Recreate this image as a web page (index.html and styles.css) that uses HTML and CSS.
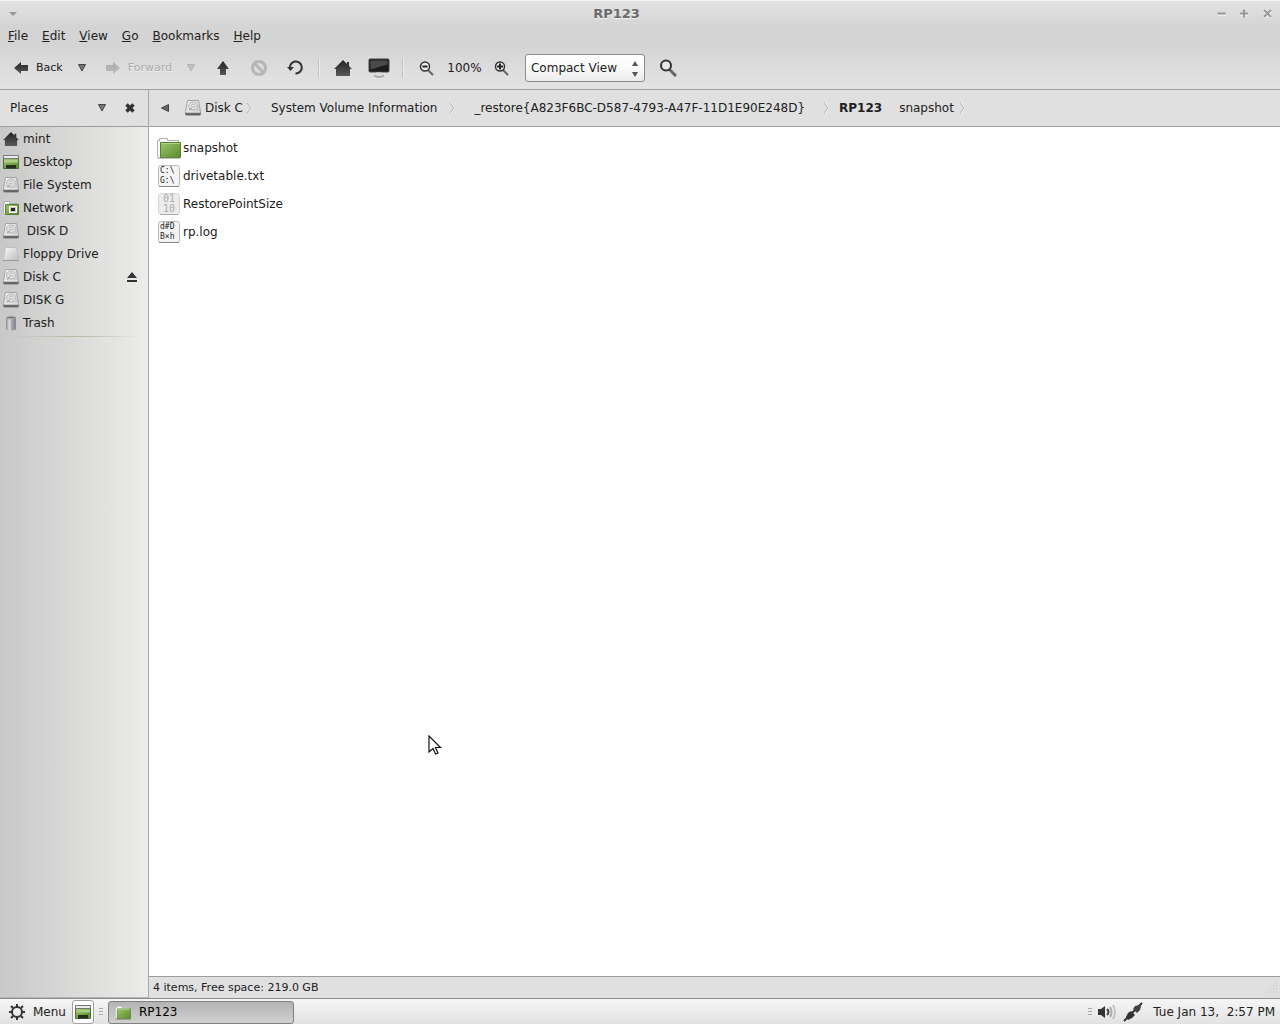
FILE: index.html
```
<!DOCTYPE html>
<html lang="en">

<head>
    <title>RP123</title>
    <meta charset="UTF-8">
    <meta name="viewport" content="width=device-width, initial-scale=1">
    <link rel="stylesheet" href="styles.css">
</head>

<body>
    <!-- shared icons -->
    <svg class="sprite" aria-hidden="true">
        <defs>
            <linearGradient id="dark" x1="0" y1="0" x2="0" y2="1">
                <stop offset="0" stop-color="#222"/>
                <stop offset="1" stop-color="#5a5a5a"/>
            </linearGradient>
            <linearGradient id="metal" x1="0" y1="0" x2="1" y2="1">
                <stop offset="0" stop-color="#fafafa"/>
                <stop offset="1" stop-color="#bcbcbc"/>
            </linearGradient>
            <linearGradient id="green" x1="0" y1="0" x2="1" y2="1">
                <stop offset="0" stop-color="#9cc56b"/>
                <stop offset="1" stop-color="#5a8a2c"/>
            </linearGradient>
            <linearGradient id="can" x1="0" y1="0" x2="1" y2="0">
                <stop offset="0" stop-color="#8b8b92"/>
                <stop offset="0.35" stop-color="#dcdce0"/>
                <stop offset="0.6" stop-color="#a0a0a6"/>
                <stop offset="1" stop-color="#85858c"/>
            </linearGradient>
        </defs>
        <symbol id="drive" viewBox="0 0 16 16">
            <path d="M2.5 .5h11l2 11v3.2q0 .8-1 .8h-13q-1 0-1-.8v-3.2z" fill="url(#metal)" stroke="#a4a4a4"/>
            <path d="M.5 12.5h15v2.500H.5z" fill="#666"/>
            <path d="M1 12h14" stroke="#eee"/>
            <ellipse cx="8" cy="6" rx="4.5" ry="4" fill="#dedede" stroke="#bbb"/>
            <ellipse cx="8" cy="5.5" rx="1.5" ry="1.3" fill="#fafafa" stroke="#b4b4b4"/>
            <path d="M4 10l3-2" stroke="#999"/>
        </symbol>
        <symbol id="home" viewBox="0 0 18 16">
            <path d="M9 0L0 9h2v7h14V9h2l-3-3V2h-2v2z" fill="url(#dark)"/>
        </symbol>
        <symbol id="desk" viewBox="0 0 16 14">
            <path d="M.5 3v10.500h15V3z" fill="url(#green)" stroke="#4d7033"/>
            <path d="M1 4.500h14v3H1z" fill="#a9cf80"/>
            <path d="M.5 .5h15v3H.5z" fill="#ececec" stroke="#777"/>
            <path d="M3 10h10v3.500H3z" fill="#27301f"/>
        </symbol>
        <symbol id="folder" viewBox="0 0 24 22">
            <path d="M.5 20.5v-17h2v-2h8v2h11v4" fill="#fafafa" stroke="#b0b0b0"/>
            <path d="M3.500 5.500h20v15h-20z" fill="url(#green)" stroke="#557f2d"/>
            <path d="M4 6.500h19" stroke="#b4d48c"/>
            <path d="M1 21h22" stroke="#7c8a6c"/>
        </symbol>
        <symbol id="down" viewBox="0 0 10 10">
            <path d="M1.500 1.500h7L5 8z" fill="#777" stroke="#444"/>
        </symbol>
        <symbol id="arrow" viewBox="0 0 14 12">
            <path d="M7 0v3h7v6H7v3L0 6z" fill="url(#dark)"/>
        </symbol>
        <symbol id="chevron" viewBox="0 0 7 14">
            <path d="M2 2l4 5-4 5" fill="none" stroke="#f4f4f4"/>
            <path d="M1 2l4 5-4 5" fill="none" stroke="#b4b4b4"/>
        </symbol>
        <symbol id="grip" viewBox="0 0 4 8">
            <path d="M0 .5h4M0 3.500h4M0 6.500h4" stroke="#aaa"/>
        </symbol>
    </svg>

    <header class="chrome">
        <div class="titlebar">
            <button class="win-btn" aria-label="Window menu"><svg width="8" height="5"><path d="M0 1h8L4 5z" fill="#999"/></svg></button>
            <h1 class="title">RP123</h1>
            <div class="win-btns">
                <button class="win-btn" aria-label="Minimize"><svg width="9" height="9"><path d="M1 6h8" stroke="#fff"/><path d="M.5 4.5h8" stroke="#999" stroke-width="2"/></svg></button>
                <button class="win-btn" aria-label="Maximize"><svg width="9" height="9"><path d="M0 6h8" stroke="#fff"/><path d="M0 4.5h8M4 .5v8" stroke="#999" stroke-width="2"/></svg></button>
                <button class="win-btn" aria-label="Close"><svg width="9" height="9"><path d="M1 2l7 7M8 2L1 9" stroke="#fff" stroke-width="2"/><path d="M1 1l7 7M8 1L1 8" stroke="#999" stroke-width="2"/></svg></button>
            </div>
        </div>
        <nav class="menubar">
            <a href="#"><u>F</u>ile</a>
            <a href="#"><u>E</u>dit</a>
            <a href="#"><u>V</u>iew</a>
            <a href="#"><u>G</u>o</a>
            <a href="#"><u>B</u>ookmarks</a>
            <a href="#"><u>H</u>elp</a>
        </nav>
        <div class="toolbar">
            <button class="nav-btn"><svg width="14" height="12"><use href="#arrow"/></svg>Back</button>
            <button class="drop" aria-label="Back history"><svg width="10" height="10"><use href="#down"/></svg></button>
            <button class="nav-btn" disabled><svg class="flip" width="14" height="12"><use href="#arrow"/></svg>Forward</button>
            <button class="drop forward-drop" aria-label="Forward history" disabled><svg width="10" height="10"><use href="#down"/></svg></button>
            <button class="tool" aria-label="Up"><svg width="12" height="14"><path d="M6 0l6 8H9v6H3V8H0z" fill="url(#dark)"/></svg></button>
            <button class="tool" aria-label="Stop" disabled><svg width="16" height="16"><circle cx="8" cy="8" r="6.5" fill="none" stroke="#4a4040" stroke-width="3"/><path d="M4 4l8 8" stroke="#4a4040" stroke-width="3"/></svg></button>
            <button class="tool" aria-label="Reload"><svg width="16" height="16"><path d="M3 9A6 6 0 1 1 8.5 13.5" fill="none" stroke="#333" stroke-width="2"/><path d="M0 7h7l-3.500 4z" fill="#333"/></svg></button>
            <span class="sep"></span>
            <button class="tool" aria-label="Home"><svg width="18" height="16"><use href="#home"/></svg></button>
            <button class="tool" aria-label="Computer"><svg width="22" height="20"><rect x="1" y="1" width="20" height="13" rx="1" fill="#1c1c1c" stroke="#444"/><path d="M2.500 2.500h17v4l-17 5z" fill="#4a4a4a"/><path d="M8 14.500h6l1 2.500H7z" fill="#ddd"/><path d="M6 17.500q5 3 10 0" fill="none" stroke="#aaa" stroke-width="2"/></svg></button>
            <span class="sep"></span>
            <button class="tool" aria-label="Zoom out"><svg width="15" height="15"><path d="M9 9l5 5" stroke="#666" stroke-width="2"/><circle cx="6" cy="5.500" r="4.500" fill="#eee" stroke="#333" stroke-width="1.500"/><path d="M3.500 5.500h5" stroke="#222" stroke-width="2"/></svg></button>
            <span class="zoom">100%</span>
            <button class="tool" aria-label="Zoom in"><svg width="15" height="15"><path d="M9 9l5 5" stroke="#666" stroke-width="2"/><circle cx="6" cy="5.500" r="4.500" fill="#eee" stroke="#333" stroke-width="1.500"/><path d="M3 5.500h6M6 2.500v6" stroke="#222" stroke-width="2"/></svg></button>
            <div class="view">
                <select aria-label="View as">
                    <option>Icon View</option>
                    <option>List View</option>
                    <option selected>Compact View</option>
                </select>
                <svg class="view-arrows" width="6" height="16"><path d="M0 5h6L3 0zM0 11h6l-3 5z" fill="#555"/></svg>
            </div>
            <button class="tool search" aria-label="Search"><svg width="18" height="18"><path d="M10 10l7 7" stroke="#666" stroke-width="3"/><circle cx="7" cy="6.500" r="5" fill="#e8e8e8" stroke="#333" stroke-width="2"/></svg></button>
        </div>
    </header>

    <div class="window">
        <aside class="side">
            <div class="side-head">
                <span class="side-title">Places</span>
                <button class="drop" aria-label="Choose pane"><svg width="10" height="10"><use href="#down"/></svg></button>
                <button class="side-close" aria-label="Close side pane"><svg width="10" height="10"><path d="M1.500 1.500l7 7M8.500 1.500l-7 7" stroke="#333" stroke-width="3.500"/></svg></button>
            </div>
            <ul class="places">
                <li><a href="#"><svg width="16" height="14"><use href="#home"/></svg>mint</a></li>
                <li><a href="#"><svg width="16" height="14"><use href="#desk"/></svg>Desktop</a></li>
                <li><a href="#"><svg width="16" height="16"><use href="#drive"/></svg>File System</a></li>
                <li><a href="#"><svg width="16" height="16"><path d="M.5 14V3.500h1v-2h5v2h8V5" fill="#fff" stroke="#b0b0b0"/><path d="M2.500 4.500h13v10h-13z" fill="url(#green)" stroke="#557f2d"/><path d="M6.500 6.500h7v6h-7z" fill="#ccc" stroke="#fff"/><path d="M8 8h4v3H8z" fill="#222"/></svg>Network</a></li>
                <li><a href="#"><svg width="16" height="16"><use href="#drive"/></svg>&nbsp;DISK D</a></li>
                <li><a href="#"><svg width="16" height="16"><path d="M2.500 1.500h11l2 11v2H.5v-2z" fill="url(#metal)" stroke="#c0c0c0"/><path d="M0 14.500h16" stroke="#999"/></svg>Floppy Drive</a></li>
                <li>
                    <a href="#"><svg width="16" height="16"><use href="#drive"/></svg>Disk C</a>
                    <button class="eject" aria-label="Eject Disk C"><svg width="10" height="10"><path d="M5 0l5 6H0zM0 8h10v2H0z" fill="#333"/></svg></button>
                </li>
                <li><a href="#"><svg width="16" height="16"><use href="#drive"/></svg>DISK G</a></li>
                <li><a href="#"><svg width="16" height="16"><path d="M3 2.500h10v12q-5 2-10 0z" fill="url(#can)"/><ellipse cx="8" cy="2.500" rx="4.500" ry="1.500" fill="#777" stroke="#b8b8be"/></svg>Trash</a></li>
            </ul>
            <hr class="side-line">
        </aside>

        <main class="main">
            <nav class="pathbar">
                <button class="path-back" aria-label="Scroll path"><svg width="8" height="8"><path d="M7.500 .5v7L.5 4z" fill="#666" stroke="#444"/></svg></button>
                <a class="crumb disk" href="#"><svg width="16" height="16"><use href="#drive"/></svg>Disk C</a>
                <svg class="chev" width="7" height="14"><use href="#chevron"/></svg>
                <a class="crumb wide" href="#">System Volume Information</a>
                <svg class="chev" width="7" height="14"><use href="#chevron"/></svg>
                <a class="crumb long" href="#">_restore{A823F6BC-D587-4793-A47F-11D1E90E248D}</a>
                <svg class="chev" width="7" height="14"><use href="#chevron"/></svg>
                <a class="crumb current" href="#">RP123</a>
                <a class="crumb last" href="#">snapshot</a>
                <svg class="chev" width="7" height="14"><use href="#chevron"/></svg>
            </nav>
            <ul class="files">
                <li><a href="#"><svg width="24" height="22"><use href="#folder"/></svg>snapshot</a></li>
                <li><a href="#"><svg width="24" height="24"><rect x="1.500" y="1.500" width="21" height="21" rx="2" fill="#f4f4f4" stroke="#b8b8b8"/><path d="M2 22.500h20" stroke="#888"/><text class="thumb" x="3" y="9">C:\</text><text class="thumb" x="3" y="19">G:\</text></svg>drivetable.txt</a></li>
                <li><a href="#"><svg width="24" height="24"><rect x="1.500" y="1.500" width="21" height="21" rx="3" fill="#ececec" stroke="#d4d4d4"/><path d="M3 22.500h18" stroke="#aaa"/><text class="thumb bits" x="6" y="10">01</text><text class="thumb bits" x="6" y="20">10</text></svg>RestorePointSize</a></li>
                <li><a href="#"><svg width="24" height="24"><rect x="1.500" y="1.500" width="21" height="21" rx="2" fill="#f4f4f4" stroke="#b8b8b8"/><path d="M2 22.500h20" stroke="#888"/><text class="thumb" x="3" y="9">d#D</text><text class="thumb" x="3" y="19">B×h</text></svg>rp.log</a></li>
            </ul>
            <footer class="status">
                <span>4 items, Free space: 219.0 GB</span>
                <svg width="11" height="11"><path d="M9 1h2M6 4h5M3 7h8M0 10h11" stroke="#c4c4c4" stroke-dasharray="1 2"/></svg>
            </footer>
        </main>
    </div>

    <!-- desktop panel -->
    <div class="panel">
        <button class="menu-btn"><svg width="18" height="18" viewBox="-9 -9 18 18"><circle r="5" fill="none" stroke="#333" stroke-width="2"/><path d="M0-8v3M0 8v-3M-8 0h3M8 0h-3M-6-6l2 2M6 6l-2-2M-6 6l2-2M6-6L4-4" stroke="#333" stroke-width="2"/></svg>Menu</button>
        <button class="launcher" aria-label="Show desktop"><svg width="16" height="14"><use href="#desk"/></svg></button>
        <svg class="grip" width="4" height="8"><use href="#grip"/></svg>
        <button class="task"><svg width="16" height="15"><use href="#folder"/></svg>RP123</button>
        <div class="tray">
            <svg class="grip" width="4" height="8"><use href="#grip"/></svg>
            <svg width="19" height="16"><path d="M0 5h3l4-3v12l-4-3H0z" fill="#333"/><path d="M9 5q3 3 0 6" fill="none" stroke="#444" stroke-width="2"/><path d="M12 3q3 5 0 10" fill="none" stroke="#aaa" stroke-width="2"/><path d="M15 1q4 7 0 14" fill="none" stroke="#c4c4c4" stroke-width="2"/></svg>
            <svg width="20" height="20"><path d="M1 19L19 1" stroke="#333" stroke-width="2"/><path d="M3 15l2-4 3-2 4 4-3 3-4 2z" fill="#333"/><path d="M10 7l2-3 4-1 2 1-1 4-3 3z" fill="#444"/></svg>
            <time class="clock">Tue Jan 13,&nbsp; 2:57 PM</time>
        </div>
    </div>

    <svg class="pointer" width="14" height="21" viewBox="0 0 14 21"><path d="M1 1v16l4-3.500 2.500 5.500 2.500-1-2.500-5.500h5z" fill="#fff" stroke="#111" stroke-width="1.200"/></svg>
</body>

</html>
```
FILE: styles.css
```
* {
    box-sizing: border-box;
    margin: 0;
    padding: 0;
}

body {
    display: flex;
    flex-direction: column;
    height: 100vh;
    overflow: hidden;
    background: #e0e0e0;
    color: #212121;
    font: 12px/16px "DejaVu Sans", sans-serif;
}

a {
    color: inherit;
    text-decoration: none;
}

ul {
    list-style: none;
}

svg {
    display: block;
    flex: none;
}

button {
    display: flex;
    align-items: center;
    justify-content: center;
    flex: none;
    background: none;
    border: none;
    color: inherit;
    font: inherit;
}

button:disabled svg {
    opacity: 0.25;
}

.sprite {
    position: absolute;
    width: 0;
    height: 0;
}

/* title, menu and toolbar */
.chrome {
    background: linear-gradient(#e3e3e3, #d4d4d4 26px, #d4d4d4 44px, #e4e4e4);
    border-top: 1px solid #f6f6f6;
    border-bottom: 1px solid #a0a0a0;
}

.titlebar {
    display: flex;
    align-items: center;
    height: 25px;
    padding: 0 8px;
}

.win-btn {
    width: 9px;
    height: 9px;
}

.title {
    flex: 1;
    margin-left: -1px;
    color: #6a6a6a;
    font-size: 13px;
    text-align: center;
    text-shadow: 0 1px #f4f4f4;
}

.win-btns {
    display: flex;
    gap: 14px;
}

.menubar {
    display: flex;
    gap: 14px;
    height: 20px;
    padding: 2px 8px;
}

.toolbar {
    display: flex;
    align-items: center;
    height: 43px;
    padding: 1px 0 0 2px;
}

.nav-btn {
    gap: 8px;
    padding: 0 7px 0 12px;
    font-size: 11px;
}

.nav-btn:disabled {
    color: #aaa;
    text-shadow: 0 1px #f0f0f0;
}

.flip {
    transform: scaleX(-1);
}

.drop {
    width: 24px;
    height: 24px;
}

.forward-drop {
    margin-right: 2px;
}

.tool {
    width: 36px;
    height: 28px;
}

.sep {
    width: 2px;
    height: 20px;
    margin: 0 5px;
    border-left: 1px solid #c0c0c0;
    border-right: 1px solid #ededed;
}

.zoom {
    width: 39px;
    text-align: center;
}

.view {
    position: relative;
    margin: 0 5px;
}

.view select {
    display: block;
    width: 120px;
    height: 28px;
    padding: 0 5px;
    appearance: none;
    background: linear-gradient(#ffffff, #fafafa 50%, #ebebeb);
    border: 1px solid #8c8c8c;
    border-radius: 3px;
    color: inherit;
    font: inherit;
}

.view-arrows {
    position: absolute;
    top: 7px;
    right: 7px;
    pointer-events: none;
}

/* side pane */
.window {
    display: flex;
    flex: 1;
    min-height: 0;
}

.side {
    width: 149px;
    background: linear-gradient(to right, #c8c8c8, #ececea);
    border-right: 1px solid #a8a8a8;
    border-bottom: 1px solid #b4b4b4;
}

.side-head,
.pathbar {
    display: flex;
    align-items: center;
    height: 37px;
    background: #e0e0e0;
    border-bottom: 1px solid #9c9c9c;
}

.side-head {
    padding: 0 8px 0 10px;
}

.side-title {
    flex: 1;
}

.side-close {
    width: 20px;
    height: 20px;
    margin-left: 6px;
}

.places li {
    display: flex;
    align-items: center;
    justify-content: space-between;
    height: 23px;
    padding: 0 11px 0 3px;
}

.places a {
    display: flex;
    align-items: center;
    gap: 4px;
}

.side-line {
    height: 1px;
    margin: 2px 8px;
    border: none;
    background: linear-gradient(to right, transparent, #b9b7a4, transparent);
}

/* location and files */
.main {
    display: flex;
    flex: 1;
    flex-direction: column;
    min-width: 0;
    background: #fff;
}

.path-back {
    width: 32px;
    height: 24px;
}

.crumb {
    display: flex;
    align-items: center;
    gap: 4px;
    white-space: nowrap;
}

.disk {
    padding: 0 3px 0 4px;
}

.wide {
    padding: 0 12px;
}

.long {
    padding: 0 18px 0 12px;
}

.current {
    padding: 0 8px 0 9px;
    font-weight: bold;
}

.last {
    padding: 0 5px 0 9px;
}

.chev {
    margin-right: 6px;
}

.long + .chev {
    margin-right: 0;
}

.files {
    flex: 1;
    padding: 7px 8px;
}

.files a {
    display: flex;
    align-items: center;
    gap: 2px;
    width: max-content;
    height: 28px;
}

.thumb {
    fill: #222;
    font: 8px "DejaVu Sans Mono", monospace;
}

.bits {
    fill: #aaa;
    font-size: 10px;
}

.status {
    display: flex;
    justify-content: space-between;
    align-items: center;
    height: 22px;
    padding: 0 2px 0 4px;
    background: #e0e0e0;
    border-top: 1px solid #9c9c9c;
    font-size: 11px;
}

/* bottom panel */
.panel {
    display: flex;
    align-items: center;
    height: 26px;
    padding: 1px 5px 0 8px;
    background: linear-gradient(#f6f6f6, #e2e2e2);
    border-top: 1px solid #8c8c8c;
}

.menu-btn {
    gap: 7px;
}

.launcher {
    width: 22px;
    height: 24px;
    margin: 0 5px 0 6px;
    background: #fff;
    border: 1px solid #a0a0a0;
    border-radius: 3px;
}

.task {
    gap: 8px;
    justify-content: flex-start;
    width: 186px;
    height: 23px;
    margin-left: 5px;
    padding-left: 6px;
    background: linear-gradient(#b4b4b4, #d0d0d0);
    border: 1px solid #808080;
    border-radius: 3px;
    color: #000;
}

.tray {
    display: flex;
    align-items: center;
    gap: 6px;
    margin-left: auto;
}

.clock {
    margin-left: 4px;
}

.pointer {
    position: absolute;
    left: 428px;
    top: 735px;
    pointer-events: none;
}
```
